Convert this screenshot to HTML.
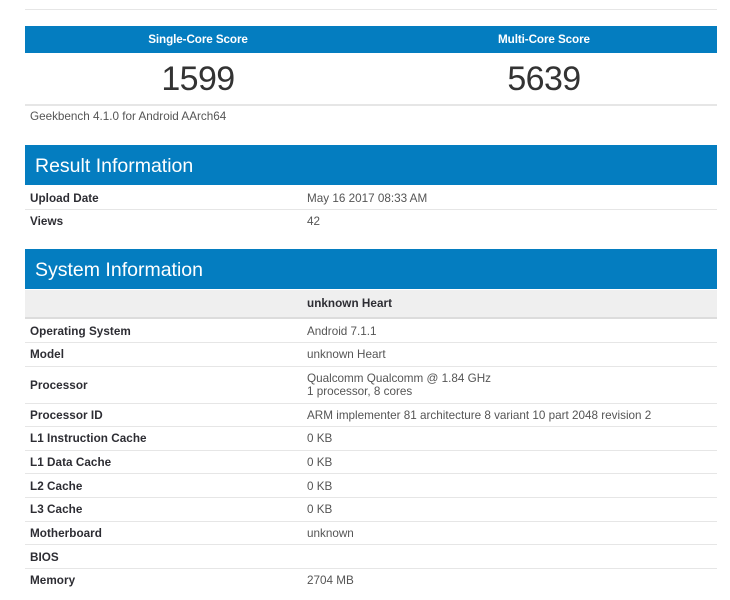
<!DOCTYPE html>
<html><head><meta charset="utf-8">
<style>
html,body{margin:0;padding:0;background:#fff;width:730px;height:600px;overflow:hidden}
body{position:relative;font-family:"Liberation Sans",Arial,sans-serif;font-size:11.7px;color:#555}
.a{position:absolute;white-space:nowrap}
.bar{position:absolute;left:25px;width:692px;background:#047dc0}
.ln{position:absolute;left:25px;width:692px;height:1px;background:#e6e6e6}
.l{position:absolute;left:30px;white-space:nowrap;font-weight:bold;color:#2d2d33;line-height:18px;letter-spacing:.05px}
.v{position:absolute;left:307px;white-space:nowrap;color:#555;line-height:18px}
.h{position:absolute;left:35px;white-space:nowrap;color:#fff;font-size:19.5px;line-height:24px}
.t{position:absolute;width:346px;text-align:center;color:#fff;font-weight:bold;line-height:18px;letter-spacing:-.1px}
.n{position:absolute;width:346px;text-align:center;color:#333;font-size:34px;line-height:40px;letter-spacing:-.6px}
</style></head><body>
<div class="ln" style="top:9px"></div>
<div class="bar" style="top:26px;height:27px"></div>
<div class="t" style="left:25px;top:31px">Single-Core Score</div>
<div class="t" style="left:371px;top:31px">Multi-Core Score</div>
<div class="n" style="left:25px;top:59px">1599</div>
<div class="n" style="left:371px;top:59px">5639</div>
<div class="ln" style="top:104px;height:2px"></div>
<div class="v" style="left:30px;top:108px">Geekbench 4.1.0 for Android AArch64</div>

<div class="bar" style="top:145px;height:40px"></div>
<div class="h" style="top:154px">Result Information</div>
<div class="l" style="top:190px">Upload Date</div><div class="v" style="top:190px">May 16 2017 08:33 AM</div>
<div class="ln" style="top:209px"></div>
<div class="l" style="top:213px">Views</div><div class="v" style="top:213px">42</div>

<div class="bar" style="top:249px;height:40px"></div>
<div class="h" style="top:258px">System Information</div>
<div class="a" style="left:25px;top:290px;width:692px;height:27px;background:#efefef"></div>
<div class="a" style="left:25px;top:317px;width:692px;height:2px;background:#dcdcdc"></div>
<div class="l" style="left:307px;top:295px">unknown Heart</div>

<div class="l" style="top:323px">Operating System</div><div class="v" style="top:323px">Android 7.1.1</div>
<div class="ln" style="top:342px"></div>
<div class="l" style="top:346px">Model</div><div class="v" style="top:346px">unknown Heart</div>
<div class="ln" style="top:366px"></div>
<div class="l" style="top:377px">Processor</div>
<div class="v" style="top:372px;line-height:13px">Qualcomm Qualcomm @ 1.84 GHz<br>1 processor, 8 cores</div>
<div class="ln" style="top:403px"></div>
<div class="l" style="top:407px">Processor ID</div><div class="v" style="top:407px">ARM implementer 81 architecture 8 variant 10 part 2048 revision 2</div>
<div class="ln" style="top:426px"></div>
<div class="l" style="top:430px">L1 Instruction Cache</div><div class="v" style="top:430px">0 KB</div>
<div class="ln" style="top:450px"></div>
<div class="l" style="top:454px">L1 Data Cache</div><div class="v" style="top:454px">0 KB</div>
<div class="ln" style="top:473px"></div>
<div class="l" style="top:478px">L2 Cache</div><div class="v" style="top:478px">0 KB</div>
<div class="ln" style="top:497px"></div>
<div class="l" style="top:501px">L3 Cache</div><div class="v" style="top:501px">0 KB</div>
<div class="ln" style="top:521px"></div>
<div class="l" style="top:525px">Motherboard</div><div class="v" style="top:525px">unknown</div>
<div class="ln" style="top:544px"></div>
<div class="l" style="top:549px">BIOS</div>
<div class="ln" style="top:568px"></div>
<div class="l" style="top:572px">Memory</div><div class="v" style="top:572px">2704 MB</div>
</body></html>
